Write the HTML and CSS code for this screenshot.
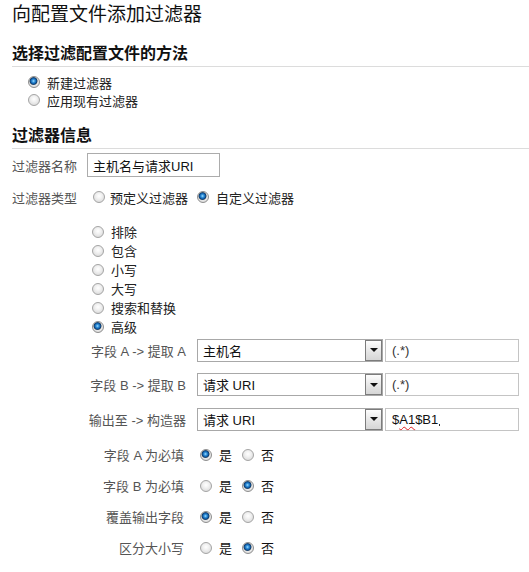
FILE: index.html
```html
<!DOCTYPE html>
<html lang="zh-CN">
<head>
<meta charset="utf-8">
<title>向配置文件添加过滤器</title>
<link rel="stylesheet" href="styles.css">
</head>
<body>
<h1 class="title">向配置文件添加过滤器</h1>

<h2 class="section-title first">选择过滤配置文件的方法</h2>
<div class="choices">
  <label class="choice"><input class="radio" type="radio" name="method" checked><span>新建过滤器</span></label>
  <label class="choice"><input class="radio" type="radio" name="method"><span>应用现有过滤器</span></label>
</div>

<h2 class="section-title second">过滤器信息</h2>
<div class="row-name">
  <span class="lbl">过滤器名称</span>
  <input class="textbox name-box" type="text" value="主机名与请求URI">
</div>
<div class="row-type">
  <span class="lbl">过滤器类型</span>
  <label class="inline-choice first-choice"><input class="radio" type="radio" name="ftype"><span>预定义过滤器</span></label>
  <label class="inline-choice second-choice"><input class="radio" type="radio" name="ftype" checked><span>自定义过滤器</span></label>
</div>

<div class="kind-list">
  <label class="kind"><input class="radio" type="radio" name="kind"><span>排除</span></label>
  <label class="kind"><input class="radio" type="radio" name="kind"><span>包含</span></label>
  <label class="kind"><input class="radio" type="radio" name="kind"><span>小写</span></label>
  <label class="kind"><input class="radio" type="radio" name="kind"><span>大写</span></label>
  <label class="kind"><input class="radio" type="radio" name="kind"><span>搜索和替换</span></label>
  <label class="kind"><input class="radio" type="radio" name="kind" checked><span>高级</span></label>
</div>

<div class="fields">
  <div class="field-row">
    <span class="flabel">字段 A -&gt; 提取 A</span>
    <div class="select"><span class="select-value">主机名</span><span class="select-btn"><span class="tri"></span></span></div>
    <input class="textbox pattern" type="text" value="(.*)">
  </div>
  <div class="field-row">
    <span class="flabel">字段 B -&gt; 提取 B</span>
    <div class="select"><span class="select-value">请求 URI</span><span class="select-btn"><span class="tri"></span></span></div>
    <input class="textbox pattern" type="text" value="(.*)">
  </div>
  <div class="field-row">
    <span class="flabel">输出至 -&gt; 构造器</span>
    <div class="select"><span class="select-value">请求 URI</span><span class="select-btn"><span class="tri"></span></span></div>
    <div class="textbox pattern output">$<span class="misspelled">A1</span>$B1<span class="caret"></span></div>
  </div>
</div>

<div class="bools">
  <div class="bool-row">
    <span class="blabel">字段 A 为必填</span>
    <label class="yn"><input class="radio" type="radio" name="areq" checked><span>是</span></label>
    <label class="yn no"><input class="radio" type="radio" name="areq"><span>否</span></label>
  </div>
  <div class="bool-row">
    <span class="blabel">字段 B 为必填</span>
    <label class="yn"><input class="radio" type="radio" name="breq"><span>是</span></label>
    <label class="yn no"><input class="radio" type="radio" name="breq" checked><span>否</span></label>
  </div>
  <div class="bool-row">
    <span class="blabel">覆盖输出字段</span>
    <label class="yn"><input class="radio" type="radio" name="over" checked><span>是</span></label>
    <label class="yn no"><input class="radio" type="radio" name="over"><span>否</span></label>
  </div>
  <div class="bool-row">
    <span class="blabel">区分大小写</span>
    <label class="yn"><input class="radio" type="radio" name="case"><span>是</span></label>
    <label class="yn no"><input class="radio" type="radio" name="case" checked><span>否</span></label>
  </div>
</div>
</body>
</html>
```
FILE: styles.css
```css
* { box-sizing: border-box; }

body {
  margin: 0;
  padding: 0 0 0 12px;
  font-family: "Liberation Sans", "Noto Sans CJK SC", sans-serif;
  font-size: 13px;
  color: #222;
  background: #fff;
}

.title {
  font-size: 19px;
  font-weight: normal;
  line-height: 22px;
  margin: 4px 0 0;
  color: #111;
}

.section-title {
  font-size: 16px;
  font-weight: bold;
  line-height: 20px;
  margin: 18px 0 0;
  padding-bottom: 2px;
  border-bottom: 1px solid #dcdcdc;
  color: #111;
}
.section-title.second { margin-top: 17px; }

.radio {
  -webkit-appearance: none;
  appearance: none;
  margin: 0;
  width: 12px;
  height: 12px;
  flex: none;
  border-radius: 50%;
  border: 1px solid #a4a4a4;
  background: radial-gradient(circle at 50% 40%, #ffffff 0, #f2f2f2 35%, #d2d2d2 100%);
}
.radio:checked {
  border-color: #8e8e8e;
  background:
    radial-gradient(circle at 45% 40%, #a8e0ff 0, #3a9ae0 1.3px, #1362ad 2.6px, #0d3f73 3.4px, rgba(40,60,80,0.6) 3.9px, rgba(255,255,255,0) 4.4px),
    radial-gradient(circle at 50% 40%, #ffffff 0, #f0f0f0 40%, #d0d0d0 100%);
}

label { cursor: default; }

.choices {
  margin-top: 6px;
  padding-left: 16px;
}
.choice {
  display: flex;
  align-items: center;
  height: 18px;
  gap: 7px;
}

.lbl { color: #555; }

.row-name {
  display: flex;
  align-items: center;
  margin-top: 4px;
  gap: 10px;
}

.textbox {
  font-family: inherit;
  font-size: 13px;
  color: #111;
  height: 24px;
  border: 1px solid #acacac;
  padding: 0 5px;
  background: #fff;
  outline: none;
}
.name-box { width: 133px; }

.row-type {
  display: flex;
  align-items: center;
  height: 20px;
  margin-top: 10px;
}
.inline-choice {
  display: flex;
  align-items: center;
  gap: 5px;
}
.first-choice { margin-left: 16px; }
.second-choice { margin-left: 9px; gap: 7px; }

.kind-list {
  margin-top: 15px;
  padding-left: 80px;
}
.kind {
  display: flex;
  align-items: center;
  height: 19px;
  gap: 7px;
}

.fields { margin-top: 2.5px; }
.field-row {
  display: flex;
  align-items: center;
  height: 23px;
}
.field-row + .field-row { margin-top: 11.5px; }

.flabel {
  width: 174px;
  text-align: right;
  color: #555;
  margin-right: 11px;
}

.select {
  width: 186px;
  height: 23px;
  border: 1px solid #a8a8a8;
  display: flex;
  align-items: center;
  justify-content: space-between;
  padding: 0 0 0 5px;
  background: #fff;
  color: #111;
}
.select-btn {
  width: 17px;
  height: 21px;
  border: 1px solid #7c7c7c;
  background: linear-gradient(#fdfdfd, #e4e4e4 60%, #d6d6d6);
  display: flex;
  align-items: center;
  justify-content: center;
}
.tri {
  width: 0;
  height: 0;
  border-left: 4px solid transparent;
  border-right: 4px solid transparent;
  border-top: 4px solid #111;
}

.pattern {
  width: 134px;
  height: 23px;
  margin-left: 2px;
  padding: 0 6px;
  border-color: #c4c4c4;
  color: #333;
}
.output {
  display: flex;
  align-items: center;
  color: #111;
}
.misspelled {
  text-decoration: underline wavy #e02020;
  text-decoration-thickness: 1px;
  text-underline-offset: 2px;
}
.caret {
  width: 1px;
  height: 2px;
  background: #333;
  align-self: flex-end;
  margin: 0 0 4px 1px;
}

.bools { margin-top: 14px; }
.bool-row {
  display: flex;
  align-items: center;
  height: 20px;
}
.bool-row + .bool-row { margin-top: 11px; }
.blabel {
  width: 172px;
  text-align: right;
  color: #555;
}
.yn {
  display: flex;
  align-items: center;
  gap: 7px;
  margin-left: 16px;
  color: #111;
}
.yn.no { margin-left: 10px; }
```
